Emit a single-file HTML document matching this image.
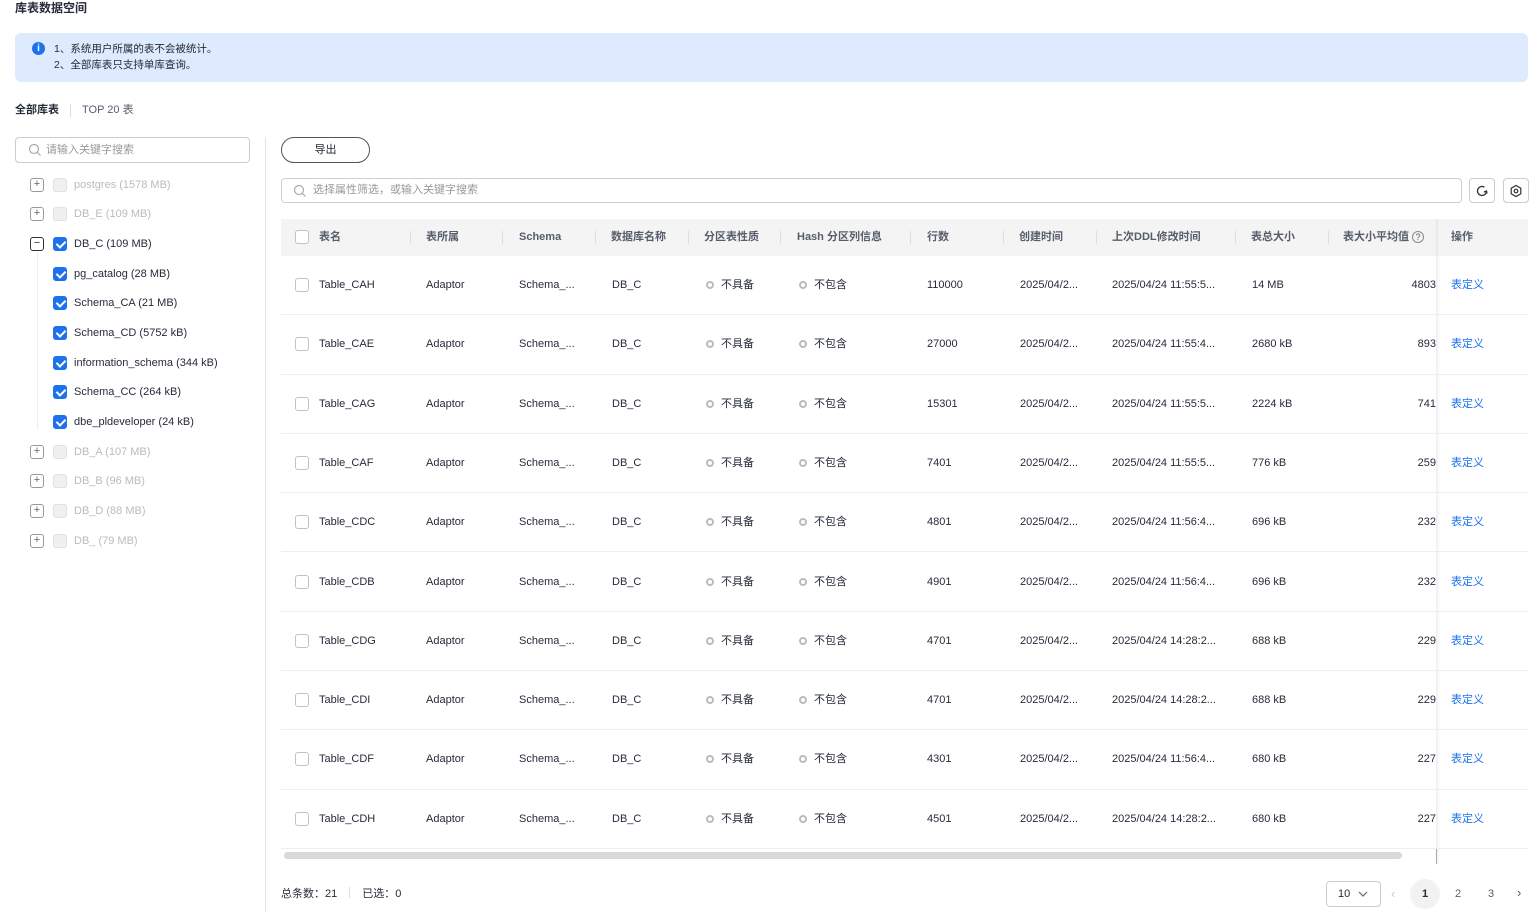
<!DOCTYPE html>
<html><head><meta charset="utf-8"><style>
*{box-sizing:border-box;margin:0;padding:0}
body{width:1536px;height:912px;background:#fff;font-family:"Liberation Sans","Noto Sans CJK SC",sans-serif;font-size:11px;color:#252b3a;position:relative;overflow:hidden}
.a{position:absolute;white-space:nowrap}
.cb{position:absolute;width:14px;height:14px;border:1px solid #c2c2c2;border-radius:3px;background:#fff}
.cb.dis{background:#f0f0f0;border-color:#e2e2e2}
.cb.on{background:#1c72ec;border-color:#1c72ec}
.cb.on:after{content:"";position:absolute;left:4px;top:1px;width:4px;height:7px;border:solid #fff;border-width:0 2px 2px 0;transform:rotate(45deg)}
.ex{position:absolute;width:14px;height:14px;border:1px solid #999;border-radius:3px;font-size:11px;line-height:11px;text-align:center;color:#666}
.tr{position:absolute;left:0;height:20px;line-height:20px}
.dim{color:#bbb}
.row{position:absolute;left:281px;width:1247px;height:59.3px;border-bottom:1px solid #eee}
.row span{position:absolute;top:0;line-height:58px}
.dot{display:inline-block;width:8px;height:8px;border:2px solid #bbb;border-radius:50%;margin-right:7px;vertical-align:-1px}
.hd{position:absolute;top:0;line-height:37px;color:#575d6c;font-weight:bold;font-size:11px}
.sep{position:absolute;top:12px;width:1px;height:13px;background:#ddd}
</style></head><body>
<div class="a" style="left:15px;top:0;font-size:12px;font-weight:bold;line-height:16px">库表数据空间</div>
<div class="a" style="left:15px;top:33px;width:1513px;height:49px;background:#deeafd;border-radius:6px"></div>
<div class="a" style="left:32px;top:42px;width:13px;height:13px;border-radius:50%;background:#1c72ec;color:#fff;font-size:10px;line-height:13px;text-align:center;font-weight:bold">i</div>
<div class="a" style="left:54px;top:41px;line-height:16px;font-size:10.5px">1、系统用户所属的表不会被统计。<br>2、全部库表只支持单库查询。</div>
<div class="a" style="left:15px;top:102px;line-height:16px;font-weight:bold;font-size:11px">全部库表</div>
<div class="a" style="left:70px;top:104px;width:1px;height:13px;background:#ddd"></div>
<div class="a" style="left:82px;top:102px;line-height:16px;color:#575d6c">TOP 20 表</div>
<div class="a" style="left:15px;top:137px;width:235px;height:26px;border:1px solid #ccc;border-radius:4px"></div>
<svg class="a" style="left:28px;top:143px" width="14" height="14" viewBox="0 0 14 14"><circle cx="6" cy="6" r="4.5" fill="none" stroke="#aaa" stroke-width="1.2"/><path d="M9.5 9.5L12.5 12.5" stroke="#aaa" stroke-width="1.2"/></svg>
<div class="a" style="left:46px;top:142px;line-height:16px;color:#999">请输入关键字搜索</div>
<div class="a" style="left:265px;top:137px;width:1px;height:775px;background:#e2e2e2"></div>
<div class="a" style="left:0;top:0;width:265px">
<div class="ex" style="left:30px;top:178px">+</div><div class="cb dis" style="left:53px;top:178px"></div><div class="tr dim" style="left:74px;top:175px">postgres (1578 MB)</div>
<div class="ex" style="left:30px;top:207px">+</div><div class="cb dis" style="left:53px;top:207px"></div><div class="tr dim" style="left:74px;top:204px">DB_E (109 MB)</div>
<div class="ex" style="left:30px;top:237px;border-color:#333;color:#333">−</div><div class="cb on" style="left:53px;top:237px"></div><div class="tr" style="left:74px;top:234px">DB_C (109 MB)</div>
<div class="a" style="left:37px;top:252px;width:1px;height:178px;background:#eee"></div>
<div class="cb on" style="left:53px;top:267px"></div><div class="tr" style="left:74px;top:264px">pg_catalog (28 MB)</div>
<div class="cb on" style="left:53px;top:296px"></div><div class="tr" style="left:74px;top:293px">Schema_CA (21 MB)</div>
<div class="cb on" style="left:53px;top:326px"></div><div class="tr" style="left:74px;top:323px">Schema_CD (5752 kB)</div>
<div class="cb on" style="left:53px;top:356px"></div><div class="tr" style="left:74px;top:353px">information_schema (344 kB)</div>
<div class="cb on" style="left:53px;top:385px"></div><div class="tr" style="left:74px;top:382px">Schema_CC (264 kB)</div>
<div class="cb on" style="left:53px;top:415px"></div><div class="tr" style="left:74px;top:412px">dbe_pldeveloper (24 kB)</div>
<div class="ex" style="left:30px;top:445px">+</div><div class="cb dis" style="left:53px;top:445px"></div><div class="tr dim" style="left:74px;top:442px">DB_A (107 MB)</div>
<div class="ex" style="left:30px;top:474px">+</div><div class="cb dis" style="left:53px;top:474px"></div><div class="tr dim" style="left:74px;top:471px">DB_B (96 MB)</div>
<div class="ex" style="left:30px;top:504px">+</div><div class="cb dis" style="left:53px;top:504px"></div><div class="tr dim" style="left:74px;top:501px">DB_D (88 MB)</div>
<div class="ex" style="left:30px;top:534px">+</div><div class="cb dis" style="left:53px;top:534px"></div><div class="tr dim" style="left:74px;top:531px">DB_ (79 MB)</div>
</div>
<div class="a" style="left:281px;top:137px;width:89px;height:26px;border:1px solid #555;border-radius:13px;text-align:center;line-height:24px">导出</div>
<div class="a" style="left:281px;top:178px;width:1181px;height:25px;border:1px solid #d0d0d0;border-radius:4px"></div>
<svg class="a" style="left:293px;top:184px" width="14" height="14" viewBox="0 0 14 14"><circle cx="6" cy="6" r="4.5" fill="none" stroke="#aaa" stroke-width="1.2"/><path d="M9.5 9.5L12.5 12.5" stroke="#aaa" stroke-width="1.2"/></svg>
<div class="a" style="left:313px;top:182px;line-height:16px;color:#999">选择属性筛选，或输入关键字搜索</div>
<div class="a" style="left:1469px;top:178px;width:26px;height:25px;border:1px solid #ccc;border-radius:4px"></div>
<svg class="a" style="left:1475px;top:184px" width="14" height="14" viewBox="0 0 14 14"><path d="M11.5 7A4.5 4.5 0 1 1 9.5 3.2" fill="none" stroke="#333" stroke-width="1.3"/><path d="M12 9.5L11.5 7L9 8" fill="none" stroke="#333" stroke-width="1.3"/></svg>
<div class="a" style="left:1503px;top:178px;width:26px;height:25px;border:1px solid #ccc;border-radius:4px"></div>
<svg class="a" style="left:1509px;top:184px" width="14" height="14" viewBox="0 0 14 14"><path d="M7 1.5L11.8 4.2V9.8L7 12.5L2.2 9.8V4.2Z" fill="none" stroke="#333" stroke-width="1.2"/><circle cx="7" cy="7" r="1.8" fill="none" stroke="#333" stroke-width="1.2"/></svg>
<div class="a" style="left:281px;top:219px;width:1247px;height:37px;background:#f4f4f4">
<div class="cb" style="left:14px;top:11px"></div>
<span class="hd" style="left:38px">表名</span><div class="sep" style="left:129px"></div>
<span class="hd" style="left:145px">表所属</span><div class="sep" style="left:221px"></div>
<span class="hd" style="left:238px">Schema</span><div class="sep" style="left:314px"></div>
<span class="hd" style="left:330px">数据库名称</span><div class="sep" style="left:407px"></div>
<span class="hd" style="left:423px">分区表性质</span><div class="sep" style="left:499px"></div>
<span class="hd" style="left:516px">Hash 分区列信息</span><div class="sep" style="left:629px"></div>
<span class="hd" style="left:646px">行数</span><div class="sep" style="left:722px"></div>
<span class="hd" style="left:738px">创建时间</span><div class="sep" style="left:815px"></div>
<span class="hd" style="left:831px">上次DDL修改时间</span><div class="sep" style="left:954px"></div>
<span class="hd" style="left:970px">表总大小</span><div class="sep" style="left:1047px"></div>
<span class="hd" style="left:1062px">表大小平均值 <span style="display:inline-block;width:12px;height:12px;border:1px solid #888;border-radius:50%;font-size:9px;line-height:10px;text-align:center;font-weight:normal">?</span></span>
<div class="a" style="left:1155px;top:0;width:3px;height:37px;background:linear-gradient(90deg,#e6e6e6,#f4f4f4)"></div>
<span class="hd" style="left:1170px">操作</span>
</div>
<div class="a" style="left:1436px;top:256px;width:4px;height:607px;background:linear-gradient(90deg,#eee,#fff)"></div>

<div class="row" style="top:256px"><div class="cb" style="left:14px;top:22px"></div><span style="left:38px">Table_CAH</span><span style="left:145px">Adaptor</span><span style="left:238px">Schema_...</span><span style="left:331px">DB_C</span><span style="left:425px"><i class="dot"></i>不具备</span><span style="left:518px"><i class="dot"></i>不包含</span><span style="left:646px">110000</span><span style="left:739px">2025/04/2...</span><span style="left:831px">2025/04/24 11:55:5...</span><span style="left:971px">14 MB</span><span style="right:92px">4803</span><span style="left:1170px;color:#1c72ec">表定义</span></div>
<div class="row" style="top:315.3px"><div class="cb" style="left:14px;top:22px"></div><span style="left:38px">Table_CAE</span><span style="left:145px">Adaptor</span><span style="left:238px">Schema_...</span><span style="left:331px">DB_C</span><span style="left:425px"><i class="dot"></i>不具备</span><span style="left:518px"><i class="dot"></i>不包含</span><span style="left:646px">27000</span><span style="left:739px">2025/04/2...</span><span style="left:831px">2025/04/24 11:55:4...</span><span style="left:971px">2680 kB</span><span style="right:92px">893</span><span style="left:1170px;color:#1c72ec">表定义</span></div>
<div class="row" style="top:374.6px"><div class="cb" style="left:14px;top:22px"></div><span style="left:38px">Table_CAG</span><span style="left:145px">Adaptor</span><span style="left:238px">Schema_...</span><span style="left:331px">DB_C</span><span style="left:425px"><i class="dot"></i>不具备</span><span style="left:518px"><i class="dot"></i>不包含</span><span style="left:646px">15301</span><span style="left:739px">2025/04/2...</span><span style="left:831px">2025/04/24 11:55:5...</span><span style="left:971px">2224 kB</span><span style="right:92px">741</span><span style="left:1170px;color:#1c72ec">表定义</span></div>
<div class="row" style="top:433.9px"><div class="cb" style="left:14px;top:22px"></div><span style="left:38px">Table_CAF</span><span style="left:145px">Adaptor</span><span style="left:238px">Schema_...</span><span style="left:331px">DB_C</span><span style="left:425px"><i class="dot"></i>不具备</span><span style="left:518px"><i class="dot"></i>不包含</span><span style="left:646px">7401</span><span style="left:739px">2025/04/2...</span><span style="left:831px">2025/04/24 11:55:5...</span><span style="left:971px">776 kB</span><span style="right:92px">259</span><span style="left:1170px;color:#1c72ec">表定义</span></div>
<div class="row" style="top:493.2px"><div class="cb" style="left:14px;top:22px"></div><span style="left:38px">Table_CDC</span><span style="left:145px">Adaptor</span><span style="left:238px">Schema_...</span><span style="left:331px">DB_C</span><span style="left:425px"><i class="dot"></i>不具备</span><span style="left:518px"><i class="dot"></i>不包含</span><span style="left:646px">4801</span><span style="left:739px">2025/04/2...</span><span style="left:831px">2025/04/24 11:56:4...</span><span style="left:971px">696 kB</span><span style="right:92px">232</span><span style="left:1170px;color:#1c72ec">表定义</span></div>
<div class="row" style="top:552.5px"><div class="cb" style="left:14px;top:22px"></div><span style="left:38px">Table_CDB</span><span style="left:145px">Adaptor</span><span style="left:238px">Schema_...</span><span style="left:331px">DB_C</span><span style="left:425px"><i class="dot"></i>不具备</span><span style="left:518px"><i class="dot"></i>不包含</span><span style="left:646px">4901</span><span style="left:739px">2025/04/2...</span><span style="left:831px">2025/04/24 11:56:4...</span><span style="left:971px">696 kB</span><span style="right:92px">232</span><span style="left:1170px;color:#1c72ec">表定义</span></div>
<div class="row" style="top:611.8px"><div class="cb" style="left:14px;top:22px"></div><span style="left:38px">Table_CDG</span><span style="left:145px">Adaptor</span><span style="left:238px">Schema_...</span><span style="left:331px">DB_C</span><span style="left:425px"><i class="dot"></i>不具备</span><span style="left:518px"><i class="dot"></i>不包含</span><span style="left:646px">4701</span><span style="left:739px">2025/04/2...</span><span style="left:831px">2025/04/24 14:28:2...</span><span style="left:971px">688 kB</span><span style="right:92px">229</span><span style="left:1170px;color:#1c72ec">表定义</span></div>
<div class="row" style="top:671.1px"><div class="cb" style="left:14px;top:22px"></div><span style="left:38px">Table_CDI</span><span style="left:145px">Adaptor</span><span style="left:238px">Schema_...</span><span style="left:331px">DB_C</span><span style="left:425px"><i class="dot"></i>不具备</span><span style="left:518px"><i class="dot"></i>不包含</span><span style="left:646px">4701</span><span style="left:739px">2025/04/2...</span><span style="left:831px">2025/04/24 14:28:2...</span><span style="left:971px">688 kB</span><span style="right:92px">229</span><span style="left:1170px;color:#1c72ec">表定义</span></div>
<div class="row" style="top:730.4px"><div class="cb" style="left:14px;top:22px"></div><span style="left:38px">Table_CDF</span><span style="left:145px">Adaptor</span><span style="left:238px">Schema_...</span><span style="left:331px">DB_C</span><span style="left:425px"><i class="dot"></i>不具备</span><span style="left:518px"><i class="dot"></i>不包含</span><span style="left:646px">4301</span><span style="left:739px">2025/04/2...</span><span style="left:831px">2025/04/24 11:56:4...</span><span style="left:971px">680 kB</span><span style="right:92px">227</span><span style="left:1170px;color:#1c72ec">表定义</span></div>
<div class="row" style="top:789.7px"><div class="cb" style="left:14px;top:22px"></div><span style="left:38px">Table_CDH</span><span style="left:145px">Adaptor</span><span style="left:238px">Schema_...</span><span style="left:331px">DB_C</span><span style="left:425px"><i class="dot"></i>不具备</span><span style="left:518px"><i class="dot"></i>不包含</span><span style="left:646px">4501</span><span style="left:739px">2025/04/2...</span><span style="left:831px">2025/04/24 14:28:2...</span><span style="left:971px">680 kB</span><span style="right:92px">227</span><span style="left:1170px;color:#1c72ec">表定义</span></div>

<div class="a" style="left:284px;top:852px;width:1118px;height:7px;background:#d9d9d9;border-radius:4px"></div>
<div class="a" style="left:1436px;top:849px;width:1px;height:15px;background:#aaa"></div>
<div class="a" style="left:281px;top:886px;line-height:16px">总条数：21<span style="display:inline-block;width:1px;height:11px;background:#ddd;margin:0 12px;vertical-align:-1px"></span>已选：0</div>
<div class="a" style="left:1326px;top:881px;width:55px;height:26px;border:1px solid #ccc;border-radius:4px;line-height:24px;padding-left:11px">10</div>
<svg class="a" style="left:1358px;top:889px" width="10" height="10" viewBox="0 0 10 10"><path d="M1 3L5 7L9 3" fill="none" stroke="#666" stroke-width="1.2"/></svg>
<div class="a" style="left:1391px;top:886px;line-height:16px;color:#ccc;font-size:13px">‹</div>
<div class="a" style="left:1410px;top:879px;width:30px;height:30px;border-radius:50%;background:#f2f2f2;text-align:center;line-height:30px;font-weight:bold">1</div>
<div class="a" style="left:1455px;top:886px;line-height:16px;color:#575d6c">2</div>
<div class="a" style="left:1488px;top:886px;line-height:16px;color:#575d6c">3</div>
<div class="a" style="left:1517px;top:885px;line-height:16px;color:#575d6c;font-size:13px">›</div>
</body></html>
